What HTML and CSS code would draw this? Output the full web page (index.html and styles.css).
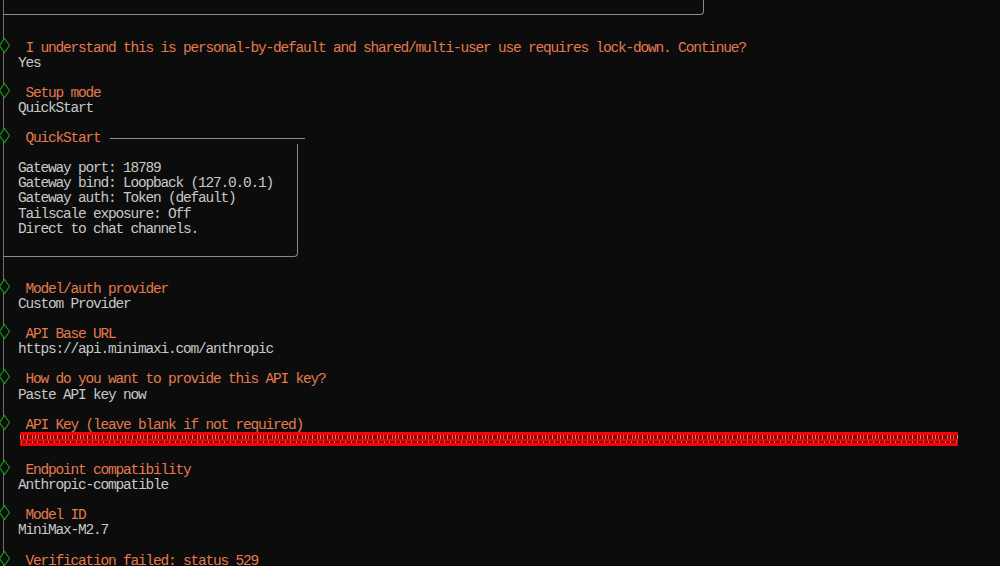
FILE: index.html
```html
<!DOCTYPE html>
<html lang="en">
<head>
<meta charset="utf-8">
<title>Onboarding</title>
<link rel="stylesheet" href="styles.css">
</head>
<body>
<div class="term">
  <div class="topbox"></div>
  <div class="rows">
    <div class="row"><span class="g"><svg class="dia" width="10" height="15" viewBox="0 0 10 15"><polygon points="4.5,-0.5 9.5,6.5 4.5,13.5 -0.5,6.5"/></svg></span><span class="t q"> I understand this is personal-by-default and shared/multi-user use requires lock-down. Continue?</span></div>
    <div class="row"><span class="g"></span><span class="t">Yes</span></div>
    <div class="row"></div>
    <div class="row"><span class="g"><svg class="dia" width="10" height="15" viewBox="0 0 10 15"><polygon points="4.5,-0.5 9.5,6.5 4.5,13.5 -0.5,6.5"/></svg></span><span class="t q"> Setup mode</span></div>
    <div class="row"><span class="g"></span><span class="t">QuickStart</span></div>
    <div class="row"></div>
    <div class="row"><span class="g"><svg class="dia" width="10" height="15" viewBox="0 0 10 15"><polygon points="4.5,-0.5 9.5,6.5 4.5,13.5 -0.5,6.5"/></svg></span><span class="t q"> QuickStart</span><span class="hl"></span></div>
    <div class="box">
      <div class="row"></div>
      <div class="row"><span class="t">Gateway port: 18789</span></div>
      <div class="row"><span class="t">Gateway bind: Loopback (127.0.0.1)</span></div>
      <div class="row"><span class="t">Gateway auth: Token (default)</span></div>
      <div class="row"><span class="t">Tailscale exposure: Off</span></div>
      <div class="row"><span class="t">Direct to chat channels.</span></div>
      <div class="row"></div>
    </div>
    <div class="row"></div>
    <div class="row"><span class="g"><svg class="dia" width="10" height="15" viewBox="0 0 10 15"><polygon points="4.5,-0.5 9.5,6.5 4.5,13.5 -0.5,6.5"/></svg></span><span class="t q"> Model/auth provider</span></div>
    <div class="row"><span class="g"></span><span class="t">Custom Provider</span></div>
    <div class="row"></div>
    <div class="row"><span class="g"><svg class="dia" width="10" height="15" viewBox="0 0 10 15"><polygon points="4.5,-0.5 9.5,6.5 4.5,13.5 -0.5,6.5"/></svg></span><span class="t q"> API Base URL</span></div>
    <div class="row"><span class="g"></span><span class="t">https://api.minimaxi.com/anthropic</span></div>
    <div class="row"></div>
    <div class="row"><span class="g"><svg class="dia" width="10" height="15" viewBox="0 0 10 15"><polygon points="4.5,-0.5 9.5,6.5 4.5,13.5 -0.5,6.5"/></svg></span><span class="t q"> How do you want to provide this API key?</span></div>
    <div class="row"><span class="g"></span><span class="t">Paste API key now</span></div>
    <div class="row"></div>
    <div class="row"><span class="g"><svg class="dia" width="10" height="15" viewBox="0 0 10 15"><polygon points="4.5,-0.5 9.5,6.5 4.5,13.5 -0.5,6.5"/></svg></span><span class="t q"> API Key (leave blank if not required)</span></div>
    <div class="row"><span class="g"></span><div class="redact"></div></div>
    <div class="row"></div>
    <div class="row"><span class="g"><svg class="dia" width="10" height="15" viewBox="0 0 10 15"><polygon points="4.5,-0.5 9.5,6.5 4.5,13.5 -0.5,6.5"/></svg></span><span class="t q"> Endpoint compatibility</span></div>
    <div class="row"><span class="g"></span><span class="t">Anthropic-compatible</span></div>
    <div class="row"></div>
    <div class="row"><span class="g"><svg class="dia" width="10" height="15" viewBox="0 0 10 15"><polygon points="4.5,-0.5 9.5,6.5 4.5,13.5 -0.5,6.5"/></svg></span><span class="t q"> Model ID</span></div>
    <div class="row"><span class="g"></span><span class="t">MiniMax-M2.7</span></div>
    <div class="row"></div>
    <div class="row"><span class="g"><svg class="dia" width="10" height="15" viewBox="0 0 10 15"><polygon points="4.5,-0.5 9.5,6.5 4.5,13.5 -0.5,6.5"/></svg></span><span class="t q"> Verification failed: status 529</span></div>
  </div>
</div>
</body>
</html>
```
FILE: styles.css
```css
html, body {
  margin: 0;
  height: 100%;
}
body {
  background: #0c0c0c;
  overflow: hidden;
  font-family: "Liberation Mono", "DejaVu Sans Mono", monospace;
  font-size: 14.5px;
  letter-spacing: -1.2px;
  color: #c8c8c8;
}
.term {
  min-height: 566px;
  background: linear-gradient(#6f6f6f, #6f6f6f) 3px 0 / 1px 100% no-repeat;
}
.topbox {
  margin-left: 3px;
  width: 701px;
  height: 15px;
  box-sizing: border-box;
  border-right: 1px solid #8a8a8a;
  border-bottom: 1px solid #8a8a8a;
  border-bottom-right-radius: 4px;
}
.rows {
  padding-top: 23.5px;
}
.row {
  display: flex;
  align-items: center;
  height: 15.1px;
  line-height: 15.1px;
  white-space: pre;
}
.t {
  padding-top: 4px;
}
.g {
  flex: none;
  width: 18px;
  height: 100%;
}
.dia {
  display: block;
  overflow: visible;
}
.dia polygon {
  fill: #0c0c0c;
  stroke: #14a014;
  stroke-width: 1.1;
}
.q {
  color: #e47a4e;
}
.hl {
  flex: none;
  width: 195px;
  height: 1px;
  margin-left: 9.5px;
  margin-top: 4px;
  background: #8a8a8a;
}
.box {
  margin-left: 3px;
  width: 295px;
  box-sizing: border-box;
  padding-left: 15px;
  padding-bottom: 6.2px;
  margin-bottom: 7.8px;
  border-right: 1px solid #8a8a8a;
  border-bottom: 1px solid #8a8a8a;
  border-bottom-right-radius: 4px;
}
.redact {
  flex: none;
  margin-left: 2px;
  margin-top: 2px;
  width: 938px;
  height: 14px;
  border-radius: 1px;
  background:
    repeating-linear-gradient(90deg, rgba(255, 215, 215, 0.6) 0 1px, transparent 1px 3.5px, rgba(255, 215, 215, 0.45) 3.5px 4.5px, transparent 4.5px 7.5px, rgba(255, 215, 215, 0.6) 7.5px 8.5px, transparent 8.5px 12px, rgba(255, 215, 215, 0.5) 12px 13px, transparent 13px 15px) 0 3px / 100% 4px no-repeat,
    repeating-linear-gradient(90deg, rgba(255, 215, 215, 0.5) 0 1px, transparent 1px 5px, rgba(255, 215, 215, 0.5) 5px 6px, transparent 6px 11px) 1px 9px / 100% 2px no-repeat,
    linear-gradient(#8a0a0a, #8a0a0a) 0 3px / 100% 4px no-repeat,
    linear-gradient(#8a0a0a, #8a0a0a) 0 9px / 100% 2px no-repeat,
    #ff0000;
}
```
